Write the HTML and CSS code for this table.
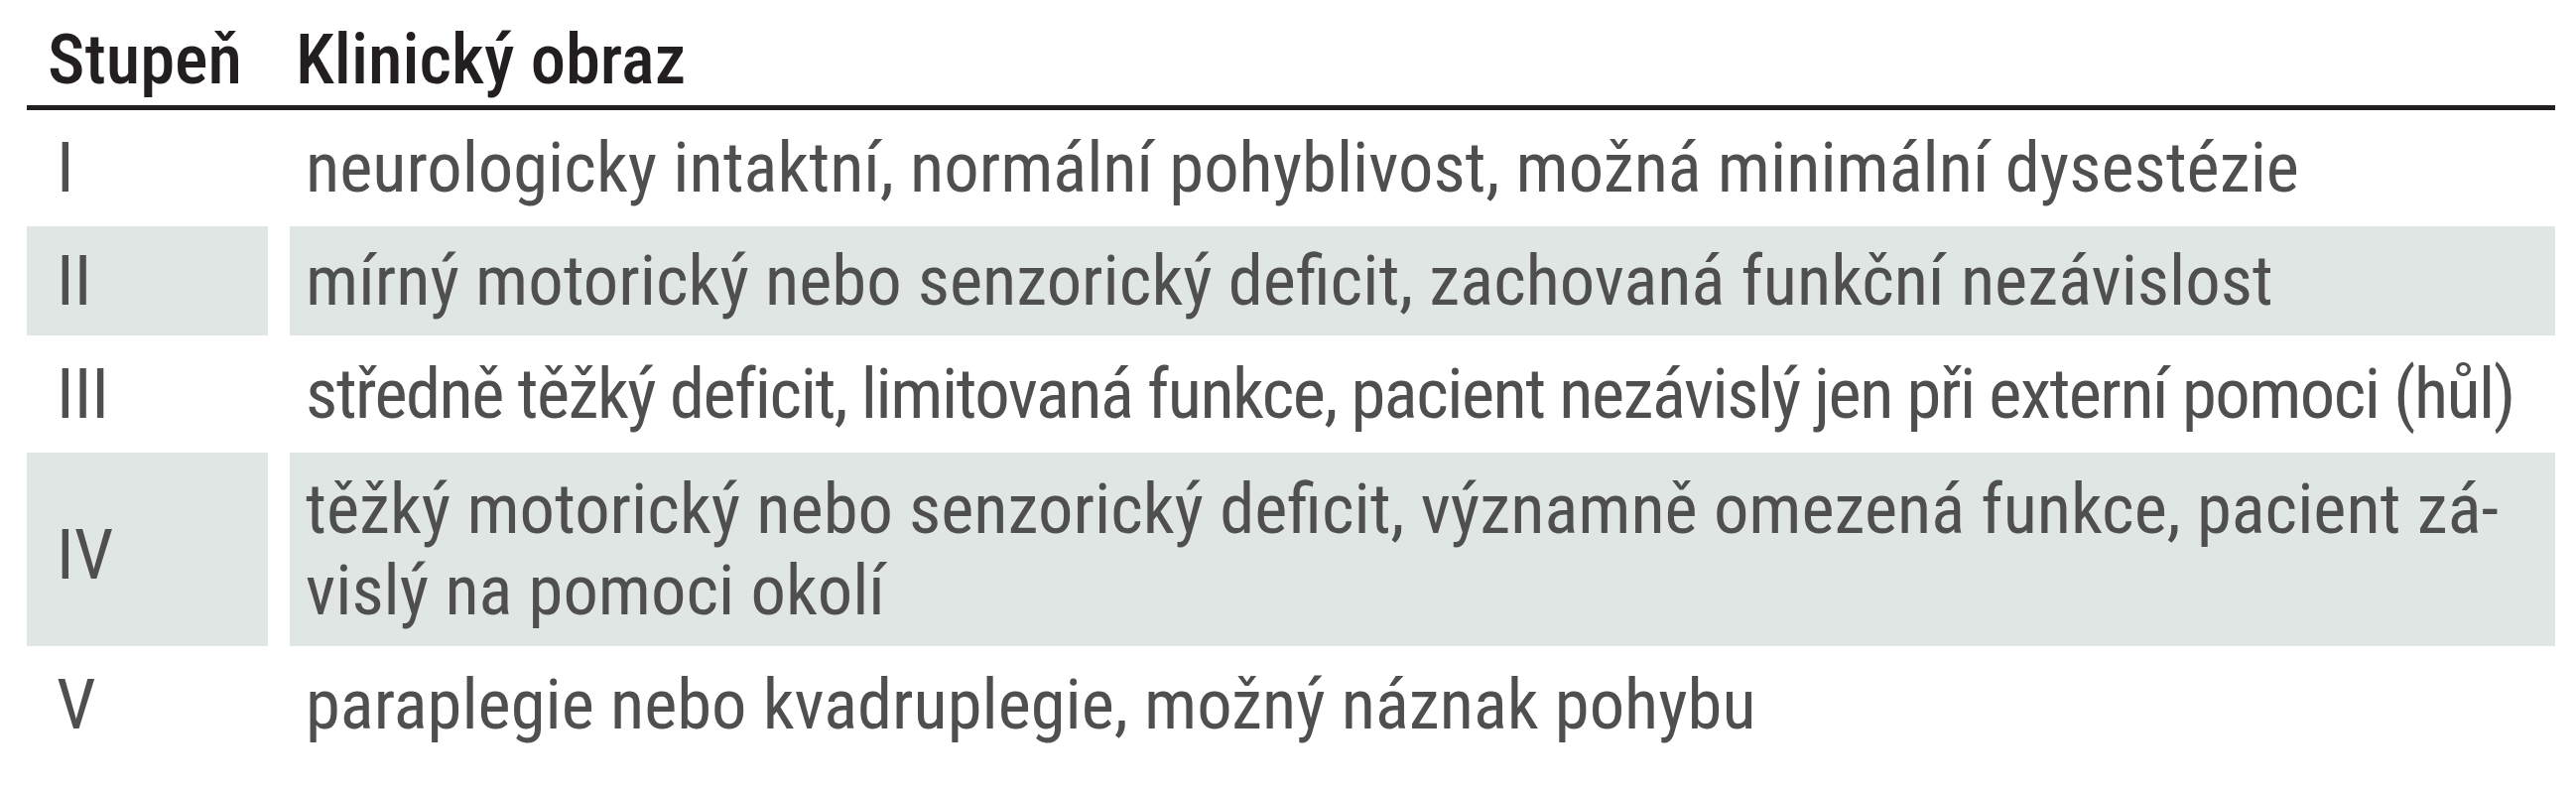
FILE: index.html
```html
<!DOCTYPE html>
<html lang="cs">
<head>
<meta charset="utf-8">
<title>Stupeň – Klinický obraz</title>
<link rel="stylesheet" href="styles.css">
</head>
<body>
<div class="table">
  <div class="row head">
    <div class="c1">Stupeň</div>
    <div class="c2">Klinický obraz</div>
  </div>
  <div class="rows">
    <div class="row">
      <div class="c1">I</div>
      <div class="c2">neurologicky intaktní, normální pohyblivost, možná minimální dysestézie</div>
    </div>
    <div class="row shade">
      <div class="c1">II</div>
      <div class="c2">mírný motorický nebo senzorický deficit, zachovaná funkční nezávislost</div>
    </div>
    <div class="row">
      <div class="c1">III</div>
      <div class="c2 tight">středně těžký deficit, limitovaná funkce, pacient nezávislý jen při externí pomoci (hůl)</div>
    </div>
    <div class="row shade tall">
      <div class="c1">IV</div>
      <div class="c2">těžký motorický nebo senzorický deficit, významně omezená funkce, pacient zá-<br>vislý na pomoci okolí</div>
    </div>
    <div class="row">
      <div class="c1">V</div>
      <div class="c2">paraplegie nebo kvadruplegie, možný náznak pohybu</div>
    </div>
  </div>
</div>
</body>
</html>
```
FILE: styles.css
```css
html, body {
  margin: 0;
  background: #ffffff;
}
body {
  font-family: "Roboto", "Liberation Sans", sans-serif;
  font-stretch: 75%;
  font-size: 70.6px;
  line-height: 82px;
  color: #4f4f4f;
}
.table {
  width: 2548px;
  margin-left: 27px;
  padding-top: 5px;
}
.row {
  display: grid;
  grid-template-columns: 243px 1fr;
  column-gap: 22px;
}
.row > div {
  padding: 14px 0;
  white-space: nowrap;
}
.c1 {
  padding-left: 30px !important;
  display: flex;
  align-items: center;
}
.c2 {
  padding-left: 16px !important;
}
.tight {
  letter-spacing: -1.5px;
}
.head {
  border-bottom: 5px solid #231f20;
  color: #231f20;
  font-weight: 500;
}
.head > div {
  padding: 14px 0 5px;
}
.head .c1 {
  padding-left: 21px !important;
}
.head .c2 {
  padding-left: 6px !important;
}
.rows {
  display: flex;
  flex-direction: column;
  gap: 4px;
  margin-top: 3px;
}
.shade > div {
  background: #dfe6e4;
}
.tall > div {
  padding: 16px 0 15px;
}
.tall .c1 {
  padding-top: 26px;
}
```
